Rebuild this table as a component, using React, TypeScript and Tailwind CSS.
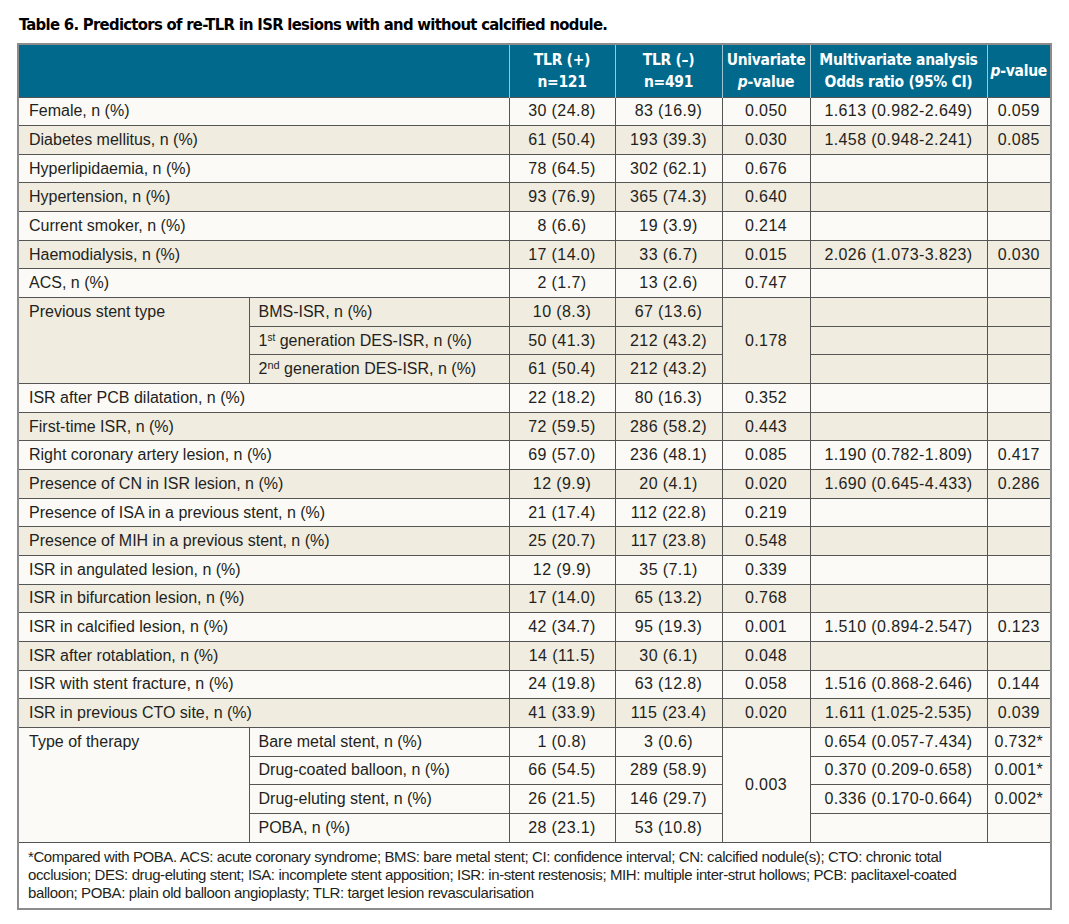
import React from "react";

type Item = { label: React.ReactNode; a: string; b: string; p?: string; or?: string; pv?: string };
type Block =
  | { kind: "row"; item: Item }
  | { kind: "group"; label: string; p: string; items: Item[] };

const blocks: Block[] = [
  { kind: "row", item: { label: "Female, n (%)", a: "30 (24.8)", b: "83 (16.9)", p: "0.050", or: "1.613 (0.982-2.649)", pv: "0.059" } },
  { kind: "row", item: { label: "Diabetes mellitus, n (%)", a: "61 (50.4)", b: "193 (39.3)", p: "0.030", or: "1.458 (0.948-2.241)", pv: "0.085" } },
  { kind: "row", item: { label: "Hyperlipidaemia, n (%)", a: "78 (64.5)", b: "302 (62.1)", p: "0.676" } },
  { kind: "row", item: { label: "Hypertension, n (%)", a: "93 (76.9)", b: "365 (74.3)", p: "0.640" } },
  { kind: "row", item: { label: "Current smoker, n (%)", a: "8 (6.6)", b: "19 (3.9)", p: "0.214" } },
  { kind: "row", item: { label: "Haemodialysis, n (%)", a: "17 (14.0)", b: "33 (6.7)", p: "0.015", or: "2.026 (1.073-3.823)", pv: "0.030" } },
  { kind: "row", item: { label: "ACS, n (%)", a: "2 (1.7)", b: "13 (2.6)", p: "0.747" } },
  {
    kind: "group",
    label: "Previous stent type",
    p: "0.178",
    items: [
      { label: "BMS-ISR, n (%)", a: "10 (8.3)", b: "67 (13.6)" },
      { label: <>1<sup className="text-[10px]">st</sup> generation DES-ISR, n (%)</>, a: "50 (41.3)", b: "212 (43.2)" },
      { label: <>2<sup className="text-[11px]">nd</sup> generation DES-ISR, n (%)</>, a: "61 (50.4)", b: "212 (43.2)" },
    ],
  },
  { kind: "row", item: { label: "ISR after PCB dilatation, n (%)", a: "22 (18.2)", b: "80 (16.3)", p: "0.352" } },
  { kind: "row", item: { label: "First-time ISR, n (%)", a: "72 (59.5)", b: "286 (58.2)", p: "0.443" } },
  { kind: "row", item: { label: "Right coronary artery lesion, n (%)", a: "69 (57.0)", b: "236 (48.1)", p: "0.085", or: "1.190 (0.782-1.809)", pv: "0.417" } },
  { kind: "row", item: { label: "Presence of CN in ISR lesion, n (%)", a: "12 (9.9)", b: "20 (4.1)", p: "0.020", or: "1.690 (0.645-4.433)", pv: "0.286" } },
  { kind: "row", item: { label: "Presence of ISA in a previous stent, n (%)", a: "21 (17.4)", b: "112 (22.8)", p: "0.219" } },
  { kind: "row", item: { label: "Presence of MIH in a previous stent, n (%)", a: "25 (20.7)", b: "117 (23.8)", p: "0.548" } },
  { kind: "row", item: { label: "ISR in angulated lesion, n (%)", a: "12 (9.9)", b: "35 (7.1)", p: "0.339" } },
  { kind: "row", item: { label: "ISR in bifurcation lesion, n (%)", a: "17 (14.0)", b: "65 (13.2)", p: "0.768" } },
  { kind: "row", item: { label: "ISR in calcified lesion, n (%)", a: "42 (34.7)", b: "95 (19.3)", p: "0.001", or: "1.510 (0.894-2.547)", pv: "0.123" } },
  { kind: "row", item: { label: "ISR after rotablation, n (%)", a: "14 (11.5)", b: "30 (6.1)", p: "0.048" } },
  { kind: "row", item: { label: "ISR with stent fracture, n (%)", a: "24 (19.8)", b: "63 (12.8)", p: "0.058", or: "1.516 (0.868-2.646)", pv: "0.144" } },
  { kind: "row", item: { label: "ISR in previous CTO site, n (%)", a: "41 (33.9)", b: "115 (23.4)", p: "0.020", or: "1.611 (1.025-2.535)", pv: "0.039" } },
  {
    kind: "group",
    label: "Type of therapy",
    p: "0.003",
    items: [
      { label: "Bare metal stent, n (%)", a: "1 (0.8)", b: "3 (0.6)", or: "0.654 (0.057-7.434)", pv: "0.732*" },
      { label: "Drug-coated balloon, n (%)", a: "66 (54.5)", b: "289 (58.9)", or: "0.370 (0.209-0.658)", pv: "0.001*" },
      { label: "Drug-eluting stent, n (%)", a: "26 (21.5)", b: "146 (29.7)", or: "0.336 (0.170-0.664)", pv: "0.002*" },
      { label: "POBA, n (%)", a: "28 (23.1)", b: "53 (10.8)" },
    ],
  },
];

const cell = "border border-[#555] h-[28.67px] p-0 align-middle";
const num = `${cell} text-center tracking-[0.4px]`;
const head =
  "border-x border-[#9fc4d3] px-0 text-center align-middle whitespace-nowrap text-white font-bold text-[15.5px] tracking-[-0.3px] leading-[22px] font-['DejaVu_Sans_Condensed','Liberation_Sans',sans-serif]";

export default function App() {
  let stripe = 0;
  const rows: React.ReactNode[] = [];

  blocks.forEach((blk, bi) => {
    const bg = stripe % 2 === 0 ? "bg-[#fbfaf6]" : "bg-[#f0ece0]";
    stripe++;
    if (blk.kind === "row") {
      const it = blk.item;
      rows.push(
        <tr key={bi} className={bg}>
          <td colSpan={2} className={`${cell} pl-[10px]`}>{it.label}</td>
          <td className={num}>{it.a}</td>
          <td className={num}>{it.b}</td>
          <td className={num}>{it.p}</td>
          <td className={num}>{it.or}</td>
          <td className={num}>{it.pv}</td>
        </tr>
      );
    } else {
      blk.items.forEach((it, ii) => {
        rows.push(
          <tr key={`${bi}-${ii}`} className={bg}>
            {ii === 0 && (
              <td rowSpan={blk.items.length} className={`${cell} pl-[10px] !align-top pt-[4px]`}>
                {blk.label}
              </td>
            )}
            <td className={`${cell} pl-[9px]`}>{it.label}</td>
            <td className={num}>{it.a}</td>
            <td className={num}>{it.b}</td>
            {ii === 0 && (
              <td rowSpan={blk.items.length} className={num}>
                {blk.p}
              </td>
            )}
            <td className={num}>{it.or}</td>
            <td className={num}>{it.pv}</td>
          </tr>
        );
      });
    }
  });

  return (
    <div className="w-[1069px] h-[924px] bg-white pl-[17px] pt-[15px] text-[#231f20] font-['Liberation_Sans',Arial,sans-serif]">
      <h1 className="text-[16.5px] leading-[20px] tracking-[-0.7px] font-bold text-black mb-[8px] pl-[2px] font-['DejaVu_Sans_Condensed','Liberation_Sans',sans-serif]">
        Table 6. Predictors of re-TLR in ISR lesions with and without calcified nodule.
      </h1>
      <table className="table-fixed border-collapse border-2 border-[#8c8c8c] w-[1033px] text-[16px] leading-[20px]">
        <colgroup>
          <col className="w-[231px]" />
          <col className="w-[260px]" />
          <col className="w-[106px]" />
          <col className="w-[107px]" />
          <col className="w-[88px]" />
          <col className="w-[177px]" />
          <col className="w-[64px]" />
        </colgroup>
        <thead>
          <tr className="bg-[#00698c] h-[53px] border-b border-[#555]">
            <th colSpan={2} className={head}></th>
            <th className={head}>
              TLR (+)
              <br />
              n=121
            </th>
            <th className={head}>
              TLR (–)
              <br />
              n=491
            </th>
            <th className={head}>
              Univariate
              <br />
              <i>p</i>-value
            </th>
            <th className={head}>
              Multivariate analysis
              <br />
              Odds ratio (95% CI)
            </th>
            <th className={head}>
              <i>p</i>-value
            </th>
          </tr>
        </thead>
        <tbody>
          {rows}
          <tr className="bg-white">
            <td colSpan={7} className="border border-[#555] px-[9px] pt-[5px] pb-[6px] text-left text-[15px] tracking-[-0.4px] leading-[18px]">
              *Compared with POBA. ACS: acute coronary syndrome; BMS: bare metal stent; CI: confidence interval; CN: calcified nodule(s); CTO: chronic total
              <br />
              occlusion; DES: drug-eluting stent; ISA: incomplete stent apposition; ISR: in-stent restenosis; MIH: multiple inter-strut hollows; PCB: paclitaxel-coated
              <br />
              balloon; POBA: plain old balloon angioplasty; TLR: target lesion revascularisation
            </td>
          </tr>
        </tbody>
      </table>
    </div>
  );
}
